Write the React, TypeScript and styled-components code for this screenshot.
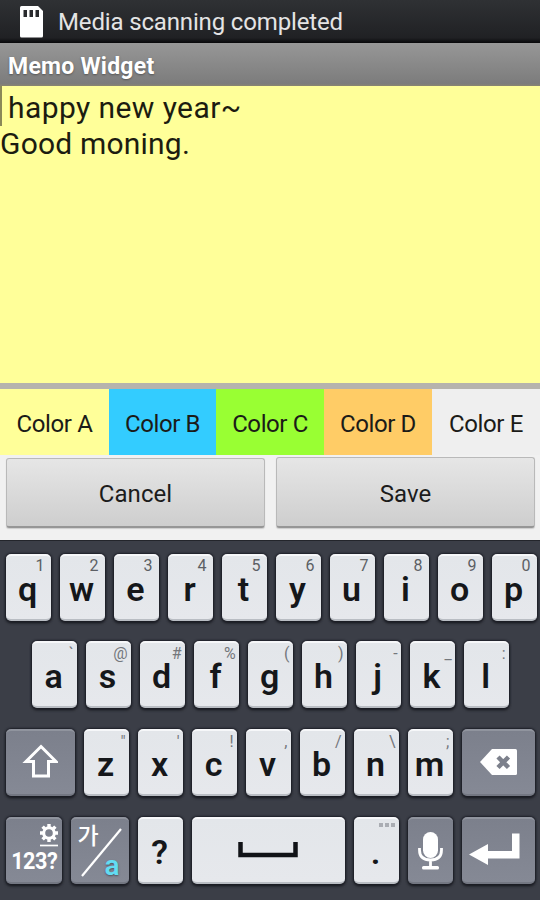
import React from "react";
import styled, { createGlobalStyle } from "styled-components";

const GlobalStyle = createGlobalStyle`
  * { box-sizing: border-box; }
  body { margin: 0; background: #3a3d46; }
`;

const Screen = styled.div`
  width: 540px;
  height: 900px;
  display: flex;
  flex-direction: column;
  overflow: hidden;
  font-family: Roboto, "Noto Sans", sans-serif;
`;

const StatusBar = styled.header`
  height: 43px;
  flex: none;
  display: flex;
  align-items: center;
  padding: 0 0 0 19px;
  gap: 15px;
  background: linear-gradient(#2f3134, #202124 88%, #08080a);
  color: #e4e4e4;
  font-size: 24px;
  letter-spacing: -0.15px;
  white-space: nowrap;
`;

const TitleBar = styled.div`
  height: 43px;
  flex: none;
  padding-left: 8px;
  background: linear-gradient(#979797, #7c7c7c 94%, #898571);
  color: #fff;
  font-size: 23px;
  line-height: 47px;
  font-weight: 700;
  letter-spacing: 0.25px;
  text-shadow: 0 1px 2px #555;
`;

const Memo = styled.section`
  height: 297px;
  flex: none;
  background: #ffff99;
  color: #1c1c10;
  font-size: 30px;
  line-height: 36px;
  padding-top: 4px;
  letter-spacing: 0.2px;
`;

const MemoLine = styled.div<{ $indent?: number }>`
  padding-left: ${(p) => p.$indent ?? 0}px;
  white-space: pre;
`;

const FirstLine = styled(MemoLine)`
  border-left: 2px solid #8a8858;
  margin-top: -4px;
  padding-top: 4px;
  letter-spacing: 0.42px;
`;

const Divider = styled.div`
  height: 6px;
  flex: none;
  background: #b6b3ad;
`;

const ColorRow = styled.div`
  display: grid;
  grid-template-columns: 109px 107px 108px 108px 108px;
  height: 66px;
  flex: none;
`;

const ColorTab = styled.div<{ $bg: string }>`
  background: ${(p) => p.$bg};
  color: #1b1b18;
  font-size: 24px;
  line-height: 70px;
  text-align: center;
  letter-spacing: -0.4px;
  white-space: nowrap;
`;

const Actions = styled.div`
  height: 85px;
  flex: none;
  display: flex;
  gap: 11px;
  align-items: flex-start;
  padding: 2px 5px 0 6px;
  background: #f1f1f1;
`;

const ActionButton = styled.button<{ $top?: number }>`
  flex: 1;
  height: ${(p) => 71 - (p.$top ?? 0)}px;
  margin: ${(p) => p.$top ?? 0}px 0 0;
  padding: 3px 0 0;
  border: 1px solid #b9b9b9;
  border-bottom: 2px solid #969696;
  border-radius: 3px;
  background: linear-gradient(#e6e6e6, #cecece);
  box-shadow: 0 1px 1px #ccc;
  color: #1c1c1c;
  font: 400 24px Roboto, sans-serif;
  letter-spacing: 0.05px;
`;

const Keyboard = styled.main`
  flex: 1;
  display: flex;
  flex-direction: column;
  gap: 20.7px;
  padding-top: 12.5px;
  border-top: 1px solid #23252b;
  background: #3b3e47;
`;

const KeyRow = styled.div<{ $left?: number }>`
  display: flex;
  gap: 9px;
  padding-left: ${(p) => p.$left ?? 5.5}px;
`;

const Key = styled.div<{ $w?: number; $dark?: boolean }>`
  position: relative;
  flex: none;
  width: ${(p) => p.$w ?? 45}px;
  height: 67px;
  display: flex;
  align-items: center;
  justify-content: center;
  border-radius: 5px;
  background: ${(p) =>
    p.$dark ? "linear-gradient(#7c808c, #858995)" : "linear-gradient(#e3e6ea, #e6e8ec)"};
  border-top: 2px solid ${(p) => (p.$dark ? "#90949e" : "#f6f7f9")};
  border-bottom: 2px solid ${(p) => (p.$dark ? "#737782" : "#b9bdc3")};
  box-shadow: 0 0 2px 1px #1d1f27, 0 2px 3px #15171c;
`;

const Letter = styled.span`
  color: #15171a;
  font-size: 34px;
  font-weight: 600;
  line-height: 26px;
  margin: 3px 1px 0 0;
`;

const Hint = styled.span<{ $sym?: boolean }>`
  position: absolute;
  top: ${(p) => (p.$sym ? 3 : 2)}px;
  right: ${(p) => (p.$sym ? 3 : 6)}px;
  color: ${(p) => (p.$sym ? "#74777c" : "#5c5f64")};
  font-size: 16px;
  line-height: 16px;
`;

const KeyIcon = styled.svg`
  display: block;
  flex: none;
`;

const ModeKey = styled(Key)`
  flex-direction: column;
  align-items: flex-end;
  justify-content: flex-start;
  padding: 5px 4px 0 0;
`;

const ModeText = styled.span`
  color: #fff;
  font-size: 24px;
  line-height: 27px;
  font-weight: 700;
  letter-spacing: -0.5px;
  transform: scaleX(0.9);
  transform-origin: right;
`;

const LangMark = styled.span<{ $latin?: boolean }>`
  position: absolute;
  ${(p) =>
    p.$latin
      ? "right: 9px; bottom: 1px; color: #62dcf2; font: 600 28px/30px Roboto, sans-serif; text-shadow: 0 1px 2px #4d515b;"
      : 'left: 7px; top: 0; color: #fff; font: 500 23px/30px "Noto Sans CJK KR", sans-serif;'}
`;

const colors = [
  ["Color A", "#ffff99"],
  ["Color B", "#33ccff"],
  ["Color C", "#99ff33"],
  ["Color D", "#ffcc66"],
  ["Color E", "#efefef"],
];

const topKeys = ["q1", "w2", "e3", "r4", "t5", "y6", "u7", "i8", "o9", "p0"];
const homeKeys = ["a`", "s@", "d#", "f%", "g(", "h)", "j-", "k_", "l:"];
const lowerKeys = ['z"', "x'", "c!", "v,", "b/", "n\\", "m;"];

function LetterKey({ pair, sym }: { pair: string; sym?: boolean }) {
  return (
    <Key>
      <Letter>{pair[0]}</Letter>
      <Hint $sym={sym}>{pair[1]}</Hint>
    </Key>
  );
}

const SdCard = () => (
  <KeyIcon width="24" height="32" viewBox="0 0 24 32">
    <path d="M1 1.500Q1 0 2.500 0H19l5 5v25q0 1.500-1.500 1.500h-20Q1 31.500 1 30Z" fill="#fff" />
    <path d="M4.500 4h3.500v7H4.500zM10.500 4h3.500v7h-3.500zM16.500 4h3.500v7h-3.500z" fill="#292a2d" />
  </KeyIcon>
);

const ShiftIcon = () => (
  <KeyIcon width="36" height="36" viewBox="0 0 36 36">
    <path d="M19 2.500 34 17.500h-7.500V32h-15V17.500H4Z" fill="none" stroke="#fff" strokeWidth="3" />
  </KeyIcon>
);

const DeleteIcon = () => (
  <KeyIcon width="38" height="28" viewBox="0 0 38 28">
    <path d="M1 14 13 1h23.500q1.500 0 1.500 1.500v23q0 1.500-1.500 1.500H13Z" fill="#fff" />
    <path d="m19 9 10.500 10.500M29.500 9 19 19.500" stroke="#7d818c" strokeWidth="4.500" />
  </KeyIcon>
);

const GearIcon = () => (
  <KeyIcon width="18" height="24" viewBox="0 0 18 24">
    <circle cx="9" cy="9" r="5.300" fill="none" stroke="#fff" strokeWidth="3" />
    <path
      d="M9 0v3M9 15v3M0 9h3M15 9h3M2.600 2.600l2.200 2.200M13.200 13.200l2.200 2.200M15.400 2.600l-2.200 2.200M4.800 13.200l-2.200 2.200"
      stroke="#fff"
      strokeWidth="3.400"
    />
    <path d="M0 21.500h18" stroke="#fff" strokeWidth="1.700" />
  </KeyIcon>
);

const SlashIcon = () => (
  <KeyIcon width="58" height="63" viewBox="0 0 58 63">
    <path d="M11 57 50 10" stroke="#fff" strokeWidth="2.200" />
  </KeyIcon>
);

const SpaceIcon = () => (
  <KeyIcon width="62" height="26" viewBox="0 0 62 26">
    <path d="M3.500 5v13h55V5" fill="none" stroke="#111317" strokeWidth="4.500" />
  </KeyIcon>
);

const DotsIcon = styled.svg`
  position: absolute;
  top: 3px;
  right: 4px;
`;

const MicIcon = () => (
  <KeyIcon width="26" height="40" viewBox="0 0 26 40">
    <rect x="6" y="2" width="15" height="26" rx="7.500" fill="#fff" />
    <path d="M2.500 18v2q0 10 11 10t11-10v-2M13.500 30v7" fill="none" stroke="#fff" strokeWidth="2.800" />
    <rect x="5" y="36" width="17" height="3.500" rx="1.500" fill="#fff" />
  </KeyIcon>
);

const EnterIcon = () => (
  <KeyIcon width="60" height="38" viewBox="0 0 60 38">
    <path d="M1 23.500 20 13v7h24V2.500h7.500v25H20v6.500Z" fill="#fff" />
  </KeyIcon>
);

export default function App() {
  return (
    <Screen>
      <GlobalStyle />
      <StatusBar>
        <SdCard />
        Media scanning completed
      </StatusBar>
      <TitleBar>Memo Widget</TitleBar>
      <Memo>
        <FirstLine $indent={6}>happy new year~</FirstLine>
        <MemoLine>Good moning.</MemoLine>
      </Memo>
      <Divider />
      <ColorRow>
        {colors.map(([label, bg]) => (
          <ColorTab key={label} $bg={bg}>{label}</ColorTab>
        ))}
      </ColorRow>
      <Actions>
        <ActionButton $top={1}>Cancel</ActionButton>
        <ActionButton>Save</ActionButton>
      </Actions>
      <Keyboard>
        <KeyRow>
          {topKeys.map((k) => <LetterKey key={k} pair={k} />)}
        </KeyRow>
        <KeyRow $left={31.6}>
          {homeKeys.map((k) => <LetterKey key={k} pair={k} sym />)}
        </KeyRow>
        <KeyRow>
          <Key $dark $w={69}><ShiftIcon /></Key>
          {lowerKeys.map((k) => <LetterKey key={k} pair={k} sym />)}
          <Key $dark $w={73}><DeleteIcon /></Key>
        </KeyRow>
        <KeyRow>
          <ModeKey $dark $w={56}>
            <GearIcon />
            <ModeText>123?</ModeText>
          </ModeKey>
          <Key $dark $w={58}>
            <SlashIcon />
            <LangMark>가</LangMark>
            <LangMark $latin>a</LangMark>
          </Key>
          <Key><Letter>?</Letter></Key>
          <Key $w={153}><SpaceIcon /></Key>
          <Key>
            <Letter>.</Letter>
            <DotsIcon width="17" height="6" viewBox="0 0 17 6">
              <path d="M1 1h4v4H1zM7 1h4v4H7zM13 1h4v4h-4z" fill="#aaadb3" />
            </DotsIcon>
          </Key>
          <Key $dark><MicIcon /></Key>
          <Key $dark $w={73}><EnterIcon /></Key>
        </KeyRow>
      </Keyboard>
    </Screen>
  );
}
